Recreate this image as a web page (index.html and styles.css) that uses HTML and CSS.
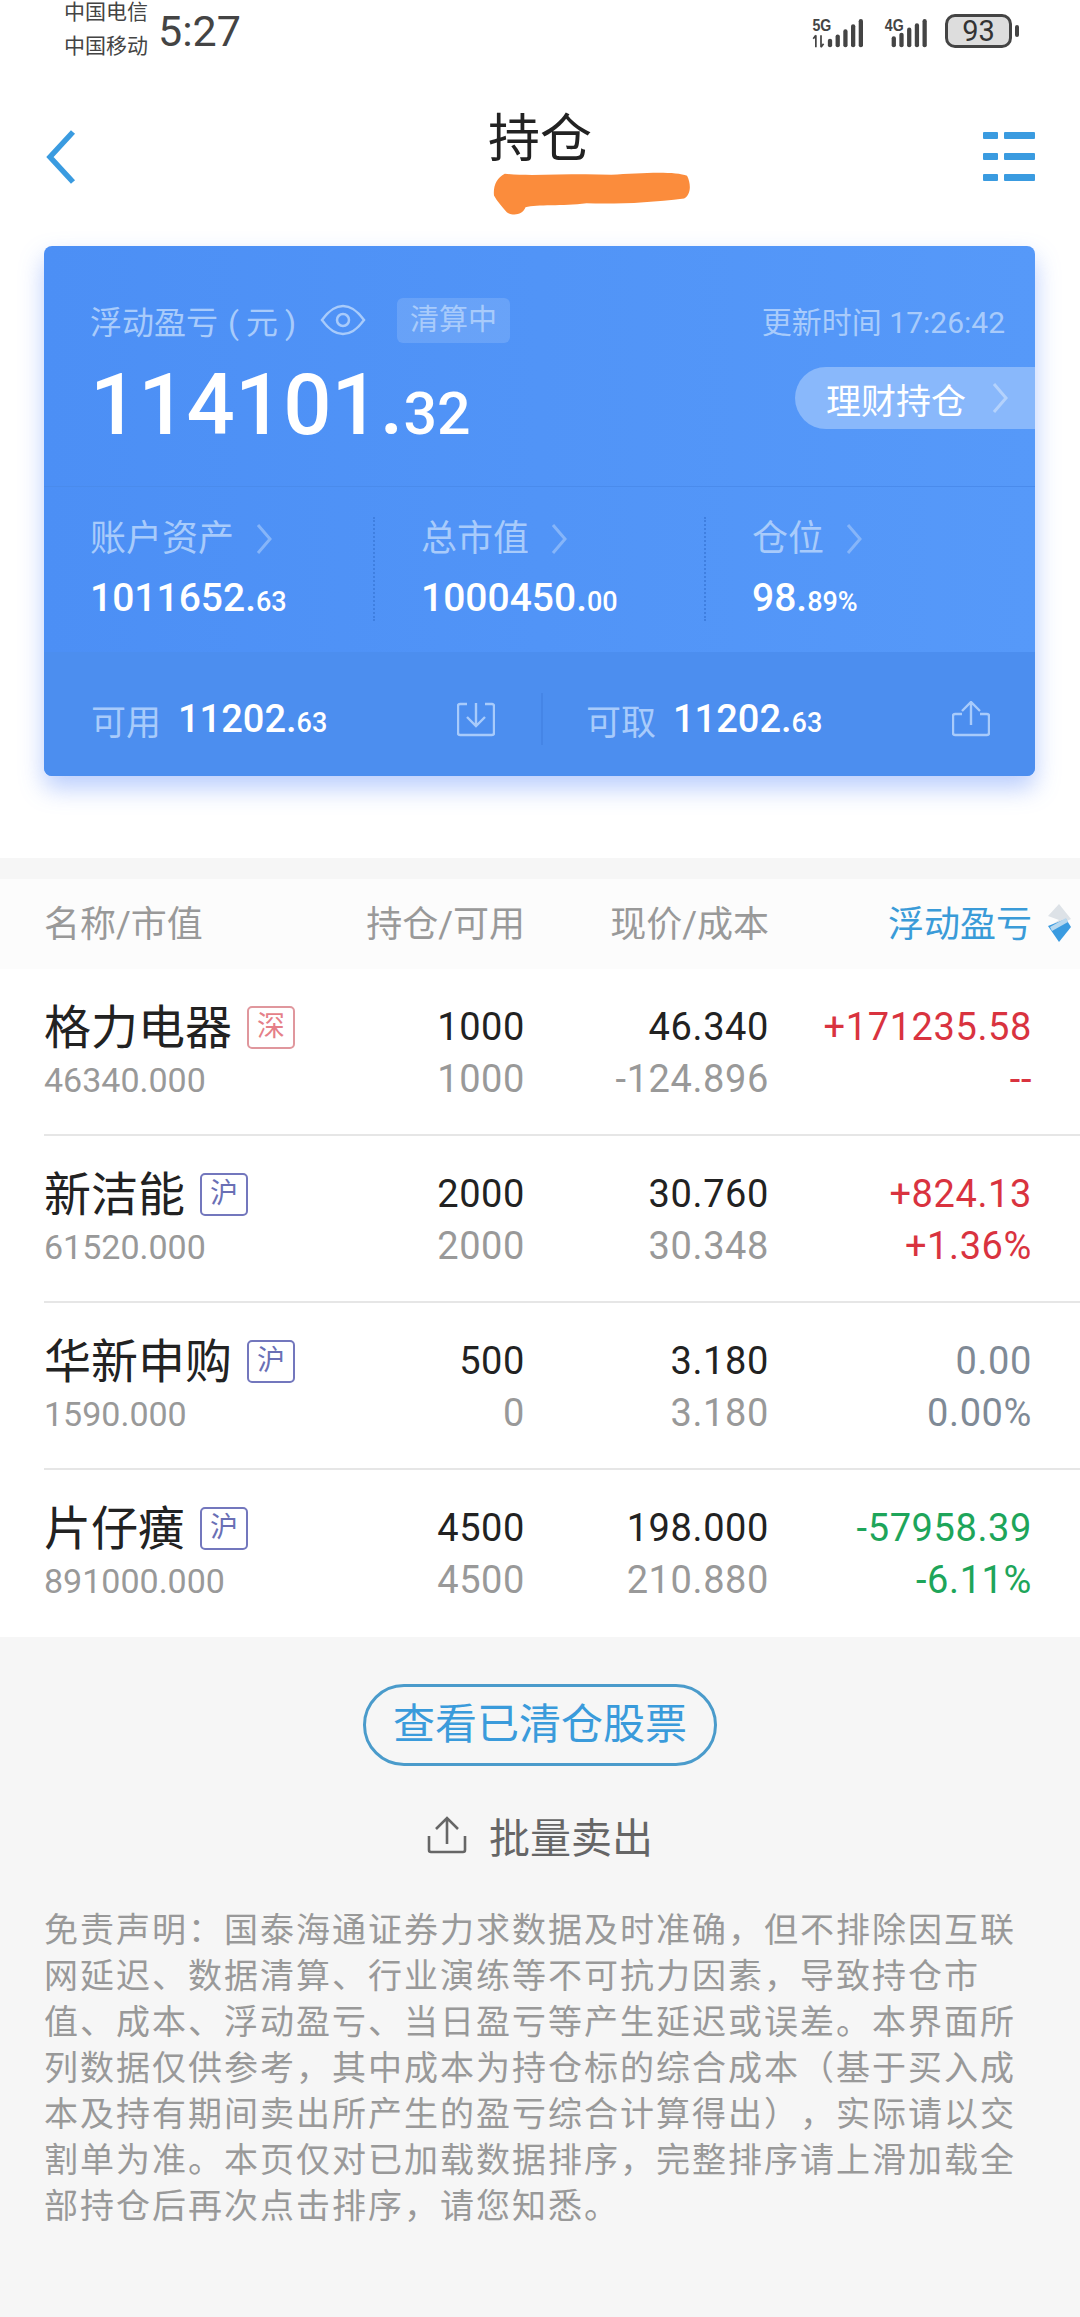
FILE: index.html

```html
<!DOCTYPE html>
<html lang="zh-CN">
<head>
    <meta charset="UTF-8">
    <meta name="viewport" content="width=device-width, initial-scale=1.0">
    <title>持仓</title>
    <link rel="stylesheet" href="styles.css">
</head>
<body>
    <!-- status bar -->
    <div class="status">
        <div class="carriers">
            <span>中国电信</span>
            <span>中国移动</span>
        </div>
        <div class="clock">5:27</div>
        <div class="status-right">
            <svg class="signal" width="62" height="36" viewBox="0 -6 62 42">
                <text x="0" y="15" class="net" textLength="22" lengthAdjust="spacingAndGlyphs">5G</text>
                <path d="M4 34V20M1 24l3-4M10 20v14M10 34l3-4" stroke="#444" stroke-width="2" fill="none"/>
                <rect x="18" y="24" width="5" height="10" rx="2.5"/>
                <rect x="27" y="19" width="5" height="15" rx="2.5"/>
                <rect x="36" y="13" width="5" height="21" rx="2.5"/>
                <rect x="45" y="7" width="5" height="27" rx="2.5"/>
                <rect x="54" y="1" width="5" height="33" rx="2.5"/>
            </svg>
            <svg class="signal" width="53" height="36" viewBox="0 -6 53 42">
                <text x="0" y="15" class="net" textLength="22" lengthAdjust="spacingAndGlyphs">4G</text>
                <rect x="8" y="21" width="5" height="13" rx="2.5"/>
                <rect x="17" y="17" width="5" height="17" rx="2.5"/>
                <rect x="26" y="11" width="5" height="23" rx="2.5"/>
                <rect x="35" y="6" width="5" height="28" rx="2.5"/>
                <rect x="44" y="1" width="5" height="33" rx="2.5"/>
            </svg>
            <div class="battery">93</div>
            <div class="battery-nub"></div>
        </div>
    </div>

    <!-- title bar -->
    <div class="nav">
        <svg class="nav-icon" width="30" height="54" viewBox="0 0 30 54">
            <path d="M27 2L4 27l23 25" fill="none" stroke="#3a9be0" stroke-width="5.5"/>
        </svg>
        <div class="nav-title">
            <h1>持仓</h1>
            <svg class="scribble" width="197" height="45" viewBox="0 0 200 44">
                <path d="M12 2C40 5 80 1 120 3C150 1 185-1 197 4C202 14 200 24 194 27C160 31 130 33 95 32C70 35 45 33 33 36C30 44 20 45 14 41C9 35 4 30 1 24C0 14 4 6 12 2Z" fill="#fb8c3c"/>
            </svg>
        </div>
        <svg class="nav-icon nav-menu" width="52" height="50" viewBox="0 0 52 50">
            <g fill="#3a9be0">
                <rect x="0" y="0" width="15" height="7" rx="1"/>
                <rect x="21" y="0" width="31" height="7" rx="1"/>
                <rect x="0" y="21" width="15" height="7" rx="1"/>
                <rect x="21" y="21" width="31" height="7" rx="1"/>
                <rect x="0" y="42" width="15" height="7" rx="1"/>
                <rect x="21" y="42" width="31" height="7" rx="1"/>
            </g>
        </svg>
    </div>

    <!-- account card -->
    <div class="card">
        <div class="card-top">
            <div class="card-head">
                <span class="float-label">浮动盈亏 <span class="unit">(元)</span></span>
                <svg class="eye" width="46" height="32" viewBox="0 0 46 32">
                    <path d="M2 16C10 5 16 2 23 2s13 3 21 14C36 27 30 30 23 30S10 27 2 16Z" fill="none" stroke="#a8cbfb" stroke-width="2.5"/>
                    <circle cx="23" cy="16" r="6" fill="none" stroke="#a8cbfb" stroke-width="2.5"/>
                </svg>
                <span class="clearing">清算中</span>
                <span class="update-time">更新时间 17:26:42</span>
            </div>
            <div class="card-main">
                <div class="profit">114101.<small>32</small></div>
                <div class="pill">
                    理财持仓
                    <svg width="17" height="32" viewBox="0 0 17 32">
                        <path d="M2 2l12 14L2 30" fill="none" stroke="#b4d2fc" stroke-width="3"/>
                    </svg>
                </div>
            </div>
        </div>

        <div class="card-stats">
            <div class="stat">
                <div class="stat-label">账户资产
                    <svg width="17" height="32" viewBox="0 0 17 32"><path d="M2 2l12 14L2 30" fill="none" stroke="#86b5f9" stroke-width="3"/></svg>
                </div>
                <div class="stat-value">1011652.<small>63</small></div>
            </div>
            <div class="stat">
                <div class="stat-label">总市值
                    <svg width="17" height="32" viewBox="0 0 17 32"><path d="M2 2l12 14L2 30" fill="none" stroke="#86b5f9" stroke-width="3"/></svg>
                </div>
                <div class="stat-value">1000450.<small>00</small></div>
            </div>
            <div class="stat stat-last">
                <div class="stat-label">仓位
                    <svg width="17" height="32" viewBox="0 0 17 32"><path d="M2 2l12 14L2 30" fill="none" stroke="#86b5f9" stroke-width="3"/></svg>
                </div>
                <div class="stat-value">98.<small>89%</small></div>
            </div>
        </div>

        <div class="card-bottom">
            <div class="fund">
                <span class="fund-label">可用</span>
                <span class="fund-value">11202.<small>63</small></span>
                <svg class="fund-icon" width="38" height="36" viewBox="0 0 38 36">
                    <path d="M10 3H3a2 2 0 0 0-2 2v27a2 2 0 0 0 2 2h32a2 2 0 0 0 2-2V5a2 2 0 0 0-2-2h-7M19 2v22M10 16l9 9 9-9" fill="none" stroke="#a8cbfb" stroke-width="2.4"/>
                </svg>
            </div>
            <div class="fund fund-second">
                <span class="fund-label">可取</span>
                <span class="fund-value">11202.<small>63</small></span>
                <svg class="fund-icon" width="38" height="36" viewBox="0 0 38 36">
                    <path d="M10 13H3a2 2 0 0 0-2 2v17a2 2 0 0 0 2 2h32a2 2 0 0 0 2-2V15a2 2 0 0 0-2-2h-7M19 24V2M10 10l9-9 9 9" fill="none" stroke="#a8cbfb" stroke-width="2.4"/>
                </svg>
            </div>
        </div>
    </div>

    <!-- holdings table -->
    <div class="band"></div>
    <div class="table-head grid-row">
        <div>名称/市值</div>
        <div class="num">持仓/可用</div>
        <div class="num">现价/成本</div>
        <div class="num sort-col">
            浮动盈亏
            <svg class="sort" width="26" height="38" viewBox="0 0 26 38">
                <path d="M13 0L25 15 17 19 22 22H4L13 16 2 12Z" fill="#dde2e7"/>
                <path d="M2 22L20 15 25 23 13 38Z" fill="#3a9be0"/>
                <path d="M4 23L20 14 22 18 6 27Z" fill="#b8d8ef"/>
            </svg>
        </div>
    </div>

    <div class="rows">
        <div class="row grid-row">
            <div>
                <div class="name">格力电器<span class="tag tag-sz">深</span></div>
                <div class="sub">46340.000</div>
            </div>
            <div class="num"><div class="val">1000</div><div class="val dim">1000</div></div>
            <div class="num"><div class="val">46.340</div><div class="val dim">-124.896</div></div>
            <div class="num up"><div class="val">+171235.58</div><div class="val">--</div></div>
        </div>
        <div class="row grid-row">
            <div>
                <div class="name">新洁能<span class="tag tag-sh">沪</span></div>
                <div class="sub">61520.000</div>
            </div>
            <div class="num"><div class="val">2000</div><div class="val dim">2000</div></div>
            <div class="num"><div class="val">30.760</div><div class="val dim">30.348</div></div>
            <div class="num up"><div class="val">+824.13</div><div class="val">+1.36%</div></div>
        </div>
        <div class="row grid-row">
            <div>
                <div class="name">华新申购<span class="tag tag-sh">沪</span></div>
                <div class="sub">1590.000</div>
            </div>
            <div class="num"><div class="val">500</div><div class="val dim">0</div></div>
            <div class="num"><div class="val">3.180</div><div class="val dim">3.180</div></div>
            <div class="num flat"><div class="val">0.00</div><div class="val">0.00%</div></div>
        </div>
        <div class="row grid-row">
            <div>
                <div class="name">片仔癀<span class="tag tag-sh">沪</span></div>
                <div class="sub">891000.000</div>
            </div>
            <div class="num"><div class="val">4500</div><div class="val dim">4500</div></div>
            <div class="num"><div class="val">198.000</div><div class="val dim">210.880</div></div>
            <div class="num down"><div class="val">-57958.39</div><div class="val">-6.11%</div></div>
        </div>
    </div>

    <!-- footer actions and notice -->
    <div class="footer">
        <div class="cleared-btn">查看已清仓股票</div>
        <div class="batch">
            <svg width="40" height="38" viewBox="0 0 40 38">
                <path d="M2 20v14a2 2 0 0 0 2 2h32a2 2 0 0 0 2-2V20M20 28V3M9 13L20 2l11 11" fill="none" stroke="#666" stroke-width="2.6"/>
            </svg>
            批量卖出
        </div>
        <p class="notice">免责声明：国泰海通证券力求数据及时准确，但不排除因互联网延迟、数据清算、行业演练等不可抗力因素，导致持仓市值、成本、浮动盈亏、当日盈亏等产生延迟或误差。本界面所列数据仅供参考，其中成本为持仓标的综合成本（基于买入成本及持有期间卖出所产生的盈亏综合计算得出），实际请以交割单为准。本页仅对已加载数据排序，完整排序请上滑加载全部持仓后再次点击排序，请您知悉。</p>
    </div>
</body>
</html>
```

FILE: styles.css

```css
* {
    box-sizing: border-box;
}
html, body {
    margin: 0;
    padding: 0;
}
body {
    width: 1080px;
    height: 2317px;
    overflow: hidden;
    background-color: #fff;
    font-family: Roboto, "Noto Sans CJK SC", sans-serif;
    color: #222;
}
svg {
    display: block;
    flex: none;
}

/* status bar */
.status {
    display: flex;
    align-items: center;
    height: 58px;
    padding: 0 61px 0 64px;
    color: #444;
}
.carriers {
    display: flex;
    flex-direction: column;
    font-size: 21px;
    line-height: 34px;
    white-space: nowrap;
}
.clock {
    margin: 4px 0 0 10px;
    font-size: 43px;
    line-height: 48px;
    color: #444;
}
.status-right {
    display: flex;
    align-items: center;
    margin-left: auto;
    margin-top: 4px;
}
.signal {
    fill: #444;
    margin-right: 11px;
}
.net {
    font-family: "Liberation Sans", sans-serif;
    font-size: 19px;
    font-weight: bold;
    fill: #444;
}
.battery {
    width: 67px;
    height: 34px;
    border: 3px solid #444;
    border-radius: 10px;
    background-color: #ddd;
    font-size: 29px;
    line-height: 28px;
    text-align: center;
    color: #333;
}
.battery-nub {
    width: 4px;
    height: 12px;
    margin-left: 3px;
    border-radius: 2px;
    background-color: #444;
}

/* title bar */
.nav {
    display: flex;
    align-items: flex-start;
    height: 188px;
    padding: 49px 45px 0 46px;
}
.nav-icon {
    margin-top: 23px;
}
.nav-menu {
    margin-left: auto;
    margin-top: 25px;
}
.nav-title {
    display: flex;
    flex-direction: column;
    margin-left: 412px;
}
.nav-title h1 {
    margin: 2px 0 0;
    font-size: 52px;
    line-height: 62px;
    font-weight: 400;
    color: #222;
}
.scribble {
    margin: 0 0 0 5px;
}

/* account card */
.card {
    width: 991px;
    height: 530px;
    margin-left: 44px;
    border-radius: 8px;
    background: linear-gradient(90deg, #4c8ff5, #5699f9);
    box-shadow: 0 12px 24px rgba(80, 130, 250, 0.4);
    color: #fff;
}
.card-top {
    height: 241px;
    padding-top: 51px;
    border-bottom: 1px solid #4a8bec;
}
.card-head {
    display: flex;
    align-items: center;
    height: 46px;
    padding: 0 30px 0 46px;
    color: #a8cbfb;
}
.float-label {
    font-size: 32px;
    white-space: nowrap;
}
.unit {
    letter-spacing: 7px;
    margin-left: 2px;
}
.eye {
    margin-left: 17px;
}
.clearing {
    margin-left: 31px;
    padding: 0 13px;
    height: 45px;
    border-radius: 6px;
    background-color: rgba(255, 255, 255, 0.14);
    font-size: 29px;
    line-height: 45px;
    white-space: nowrap;
}
.update-time {
    margin-left: auto;
    font-size: 30px;
    white-space: nowrap;
}
.card-main {
    display: flex;
    align-items: center;
    justify-content: space-between;
    height: 120px;
    padding-left: 46px;
}
.profit {
    margin-top: 12px;
    font-size: 85px;
    font-weight: 500;
    line-height: 100px;
    white-space: nowrap;
}
.profit small {
    font-size: 59px;
}
.pill {
    display: flex;
    align-items: center;
    width: 240px;
    height: 62px;
    margin-bottom: 10px;
    padding-left: 31px;
    border-radius: 31px 0 0 31px;
    background-color: #89b8fb;
    font-size: 35px;
    white-space: nowrap;
}
.pill svg {
    margin-left: 26px;
}

.card-stats {
    display: grid;
    grid-template-columns: 331px 331px 1fr;
    height: 165px;
    padding-top: 30px;
}
.stat {
    height: 104px;
    padding-left: 46px;
    border-right: 2px dotted #3f7fe0;
}
.stat-last {
    border-right: none;
}
.stat-label {
    display: flex;
    align-items: center;
    gap: 22px;
    padding-top: 3px;
    font-size: 36px;
    line-height: 38px;
    color: #a8cbfb;
}
.stat-value {
    margin-top: 17px;
    font-size: 39px;
    line-height: 46px;
    font-weight: 500;
}
.stat-value small {
    font-size: 27px;
}

.card-bottom {
    display: flex;
    align-items: center;
    height: 124px;
    padding-top: 10px;
    border-radius: 0 0 8px 8px;
    background-color: #4c8eef;
}
.fund {
    display: flex;
    align-items: center;
    flex: none;
    width: 497px;
    height: 52px;
    padding: 0 46px 0 47px;
}
.fund-second {
    width: 494px;
    padding: 0 45px 0 43px;
    border-left: 2px solid #4585e6;
}
.fund-label {
    font-size: 35px;
    color: #a8cbfb;
}
.fund-value {
    margin-left: 17px;
    font-size: 38px;
    font-weight: 500;
}
.fund-value small {
    font-size: 27px;
}
.fund-icon {
    margin-left: auto;
}

/* holdings table */
.band {
    height: 21px;
    margin-top: 82px;
    background-color: #f6f6f6;
}
.grid-row {
    display: grid;
    grid-template-columns: 1fr 200px 244px 263px;
    padding: 0 48px 0 44px;
}
.table-head {
    align-items: center;
    height: 90px;
    padding-bottom: 6px;
    background-color: #fcfcfc;
    font-size: 36px;
    color: #999;
    white-space: nowrap;
}
.num {
    text-align: right;
}
.sort-col {
    position: relative;
    color: #3a9bd8;
}
.sort {
    position: absolute;
    right: -40px;
    top: 9px;
}
.row {
    align-items: center;
    height: 167px;
}
.row::after {
    content: "";
    position: absolute;
    left: 44px;
    right: 0;
    height: 2px;
    margin-top: 165px;
    background-color: #e6e6e6;
}
.row:last-child::after {
    display: none;
}
.rows {
    background-color: #fff;
}
.name {
    display: flex;
    align-items: center;
    padding-top: 2px;
    font-size: 47px;
    line-height: 52px;
    color: #222;
}
.tag {
    width: 48px;
    height: 43px;
    margin-left: 15px;
    border: 2px solid;
    border-radius: 5px;
    font-size: 28px;
    line-height: 38px;
    text-align: center;
}
.tag-sz {
    border-color: #e0979d;
    color: #e57f88;
}
.tag-sh {
    border-color: #7377bd;
    color: #6a6fb5;
}
.sub {
    font-size: 34px;
    line-height: 52px;
    color: #999;
}
.val {
    font-size: 38px;
    letter-spacing: 0.6px;
    line-height: 52px;
    color: #222;
}
.val.dim {
    color: #999;
}
.up .val {
    color: #d9333f;
}
.flat .val {
    color: #7f8a96;
}
.down .val {
    color: #1ea55a;
}

/* footer */
.footer {
    height: 682px;
    padding-top: 47px;
    background-color: #f6f6f6;
}
.cleared-btn {
    width: 354px;
    height: 82px;
    margin: 0 auto;
    border: 3px solid #4a9bcb;
    border-radius: 41px;
    font-size: 42px;
    line-height: 75px;
    text-align: center;
    color: #3a9bdb;
    white-space: nowrap;
}
.batch {
    display: flex;
    align-items: center;
    justify-content: center;
    gap: 22px;
    height: 56px;
    margin-top: 41px;
    font-size: 41px;
    color: #666;
}
.notice {
    width: 992px;
    margin: 44px 0 0 44px;
    font-size: 34px;
    letter-spacing: 2px;
    line-height: 46px;
    color: #999;
    text-spacing-trim: space-all;
}
```
